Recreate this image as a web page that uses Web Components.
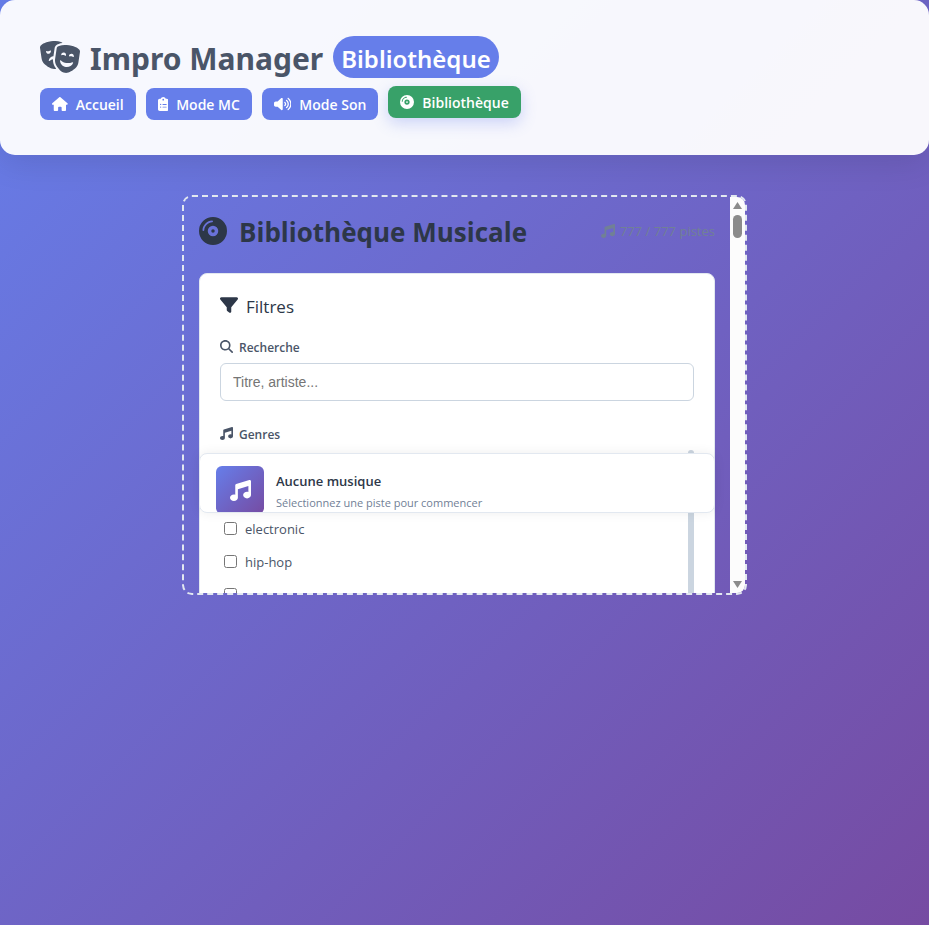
<!DOCTYPE html>
<html lang="fr">
<head>
<meta charset="utf-8">
<meta name="viewport" content="width=device-width, initial-scale=1">
<title>Impro Manager – Bibliothèque</title>
<style>
  html { min-height: 100%; background: linear-gradient(135deg, #667eea 0%, #764ba2 100%); }
  body { margin: 0; font-family: "Segoe UI", "Open Sans", "Noto Sans", sans-serif; color: #2d3748; }
  main { display: flex; justify-content: center; padding: 40px 20px; }
</style>
</head>
<body>
<app-header>
  Impro Manager
  <span slot="badge">Bibliothèque</span>
  <nav-link slot="nav" icon="home">Accueil</nav-link>
  <nav-link slot="nav" icon="clipboard">Mode MC</nav-link>
  <nav-link slot="nav" icon="volume">Mode Son</nav-link>
  <nav-link slot="nav" icon="disc" active>Bibliothèque</nav-link>
</app-header>
<main>
  <scroll-panel>
    <library-heading>
      Bibliothèque Musicale
      <span slot="count">777 / 777 pistes</span>
    </library-heading>
    <filter-card></filter-card>
    <music-player slot="overlay">
      Aucune musique
      <span slot="artist">Sélectionnez une piste pour commencer</span>
    </music-player>
  </scroll-panel>
</main>

<script>
const ICONS = {
  masks: [640, 512, 'M74.6 373.2c41.7 36.1 108 82.5 166.1 73.7c6.1-.9 12.1-2.5 18-4.5c-9.2-12.3-17.3-24.4-24.2-35.4c-21.9-35-28.8-75.2-25.9-113.6c-20.6 4.1-39.2 13-54.7 25.4c-6.5 5.2-16.3 1.3-14.8-7c6.4-33.5 33-60.9 68.2-66.3c2.6-.4 5.3-.7 7.9-.8l19.4-131.3c2-13.8 8-32.7 25-45.9C278.2 53.2 310.5 37 363.2 32.2c-.8-.7-1.6-1.4-2.4-2.1C340.6 14.5 288.4-11.5 175.7 5.6S20.5 63 5.7 83.9C0 91.9-.8 102 .6 111.8L24.8 276.1c5.5 37.3 21.5 72.6 49.8 97.2zm87.7-219.6c4.4-3.1 10.8-2 11.8 3.3c.1 .5 .2 1.1 .3 1.6c3.2 21.8-11.6 42-33.1 45.3s-41.5-11.8-44.7-33.5c-.1-.5-.1-1.1-.2-1.6c-.6-5.4 5.2-8.4 10.3-6.7c9 3 18.8 3.9 28.7 2.4s19.1-5.3 26.8-10.8zM261.6 390c29.4 46.9 79.5 110.9 137.6 119.7s124.5-37.5 166.1-73.7c28.3-24.5 44.3-59.8 49.8-97.2l24.2-164.3c1.4-9.8 .6-19.9-5.1-27.9c-14.8-20.9-57.3-61.2-170-78.3S299.4 77.2 279.2 92.8c-7.8 6-11.5 15.4-12.9 25.2L242.1 282.3c-5.5 37.3-.4 75.8 19.6 107.7zM404.5 235.3c-7.7-5.5-16.8-9.3-26.8-10.8s-19.8-.6-28.7 2.4c-5.1 1.7-10.9-1.3-10.3-6.7c.1-.5 .1-1.1 .2-1.6c3.2-21.8 23.2-36.8 44.7-33.5s36.3 23.5 33.1 45.3c-.1 .5-.2 1.1-.3 1.6c-1 5.3-7.4 6.4-11.8 3.3zm136.2 15.5c-1 5.3-7.4 6.4-11.8 3.3c-7.7-5.5-16.8-9.3-26.8-10.8s-19.8-.6-28.7 2.4c-5.1 1.7-10.9-1.3-10.3-6.7c.1-.5 .1-1.1 .2-1.6c3.2-21.8 23.2-36.8 44.7-33.5s36.3 23.5 33.1 45.3c-.1 .5-.2 1.1-.3 1.6zM530 350.2c-19.6 44.7-66.8 72.5-116.8 64.9s-87.1-48.2-93-96.7c-1-8.3 8.9-12.1 15.2-6.7c23.9 20.8 53.6 35.3 87 40.3s66.1 .1 94.9-12.8c7.6-3.4 16 3.2 12.6 10.9z'],
  home: [576, 512, 'M575.8 255.5c0 18-15 32.1-32 32.1h-32l.7 160.2c0 2.7-.2 5.4-.5 8.1V472c0 22.1-17.9 40-40 40H456c-1.1 0-2.2 0-3.3-.1c-1.4 .1-2.8 .1-4.2 .1H416 392c-22.1 0-40-17.9-40-40V448 384c0-17.7-14.3-32-32-32H256c-17.7 0-32 14.3-32 32v64 24c0 22.1-17.9 40-40 40H160 128.1c-1.5 0-3-.1-4.5-.2c-1.2 .1-2.4 .2-3.6 .2H104c-22.1 0-40-17.9-40-40V360c0-.9 0-1.9 .1-2.8V287.6H32c-18 0-32-14-32-32.1c0-9 3-17 10-24L266.4 8c7-7 15-8 22-8s15 2 21 7L564.8 231.5c8 7 12 15 11 24z'],
  clipboard: [384, 512, 'M192 0c-41.8 0-77.4 26.7-90.5 64H64C28.7 64 0 92.7 0 128V448c0 35.3 28.7 64 64 64H320c35.3 0 64-28.7 64-64V128c0-35.3-28.7-64-64-64H282.5C269.4 26.7 233.8 0 192 0zm0 64a32 32 0 1 1 0 64 32 32 0 1 1 0-64zM72 272a24 24 0 1 1 48 0 24 24 0 1 1 -48 0zm104-16H304c8.8 0 16 7.2 16 16s-7.2 16-16 16H176c-8.8 0-16-7.2-16-16s7.2-16 16-16zM72 368a24 24 0 1 1 48 0 24 24 0 1 1 -48 0zm88 0c0-8.8 7.2-16 16-16H304c8.8 0 16 7.2 16 16s-7.2 16-16 16H176c-8.8 0-16-7.2-16-16z'],
  volume: [640, 512, 'M533.6 32.5C598.5 85.2 640 165.8 640 256s-41.5 170.7-106.4 223.5c-10.3 8.4-25.4 6.8-33.8-3.5s-6.8-25.4 3.5-33.8C557.5 398.2 592 331.2 592 256s-34.5-142.2-88.7-186.3c-10.3-8.4-11.8-23.5-3.5-33.8s23.5-11.8 33.8-3.5zM473.1 107c43.2 35.2 70.9 88.9 70.9 149s-27.7 113.8-70.9 149c-10.3 8.4-25.4 6.8-33.8-3.5s-6.8-25.4 3.5-33.8C475.3 341.3 496 301.1 496 256s-20.7-85.3-53.2-111.8c-10.3-8.4-11.8-23.5-3.5-33.8s23.5-11.8 33.8-3.5zm-60.5 74.5C434.1 199.1 448 225.9 448 256s-13.9 56.9-35.4 74.5c-10.3 8.4-25.4 6.8-33.8-3.5s-6.8-25.4 3.5-33.8C393.1 284.4 400 271 400 256s-6.9-28.4-17.7-37.3c-10.3-8.4-11.8-23.5-3.5-33.8s23.5-11.8 33.8-3.5zM301.1 34.8C312.6 40 320 51.4 320 64V448c0 12.6-7.4 24-18.9 29.2s-25 3.1-34.4-5.3L131.8 352H64c-35.3 0-64-28.7-64-64V224c0-35.3 28.7-64 64-64h67.8L266.7 40.1c9.4-8.4 22.9-10.4 34.4-5.3z'],
  disc: [512, 512, 'M0 256a256 256 0 1 1 512 0A256 256 0 1 1 0 256zm256 32a32 32 0 1 1 0-64 32 32 0 1 1 0 64zm-96-32a96 96 0 1 0 192 0 96 96 0 1 0 -192 0zM96 240c0-35 17.5-71.1 45.2-98.8S205 96 240 96c8.8 0 16-7.2 16-16s-7.2-16-16-16c-45.4 0-89.2 22.3-121.5 54.5S64 194.6 64 240c0 8.8 7.2 16 16 16s16-7.2 16-16z'],
  music: [512, 512, 'M499.1 6.3c8.1 6 12.9 15.6 12.9 25.7v72V368c0 44.2-43 80-96 80s-96-35.8-96-80s43-80 96-80c11.2 0 22 1.6 32 4.6V147L192 223.8V432c0 44.2-43 80-96 80s-96-35.8-96-80s43-80 96-80c11.2 0 22 1.6 32 4.6V200 128c0-14.1 9.3-26.6 22.8-30.7l320-96c9.7-2.9 20.2-1.1 28.3 5z'],
  filter: [512, 512, 'M3.9 54.9C10.5 40.9 24.5 32 40 32H472c15.5 0 29.5 8.9 36.1 22.9s4.6 30.5-5.2 42.5L320 320.9V448c0 12.1-6.8 23.2-17.7 28.6s-23.8 4.3-33.5-3l-64-48c-8.1-6-12.8-15.5-12.8-25.6V320.9L9 97.3C-.7 85.4-2.8 68.8 3.9 54.9z'],
  search: [512, 512, 'M416 208c0 45.9-14.9 88.3-40 122.7L502.6 457.4c12.5 12.5 12.5 32.8 0 45.3s-32.8 12.5-45.3 0L330.7 376c-34.4 25.2-76.8 40-122.7 40C93.1 416 0 322.9 0 208S93.1 0 208 0S416 93.1 416 208zM208 352a144 144 0 1 0 0-288 144 144 0 1 0 0 288z']
};

function define(name, markup, setup) {
  const template = document.createElement('template');
  template.innerHTML = markup;
  customElements.define(name, class extends HTMLElement {
    constructor() {
      super();
      this.attachShadow({ mode: 'open' }).append(template.content.cloneNode(true));
    }
    connectedCallback() { if (setup) setup(this, this.shadowRoot); }
  });
}

define('app-icon', `
  <style>
    :host { display: inline-flex; flex: none; height: var(--icon-size, 14px); }
    svg { height: 100%; width: auto; fill: currentColor; fill-rule: evenodd; }
  </style>
  <svg aria-hidden="true"><path/></svg>`,
  (host, root) => {
    const [w, h, d] = ICONS[host.getAttribute('name')];
    root.querySelector('svg').setAttribute('viewBox', `0 0 ${w} ${h}`);
    root.querySelector('path').setAttribute('d', d);
  });

define('nav-link', `
  <style>
    :host { display: block; }
    a { display: flex; align-items: center; gap: 8px; height: 32px; padding: 0 12px; box-sizing: border-box;
        border-radius: 8px; background: #667eea; color: #fff; text-decoration: none;
        font-size: 14px; font-weight: 600; line-height: 20px; white-space: nowrap; }
    span { padding-top: 2px; }
    :host([active]) a { background: #38a169; transform: translateY(-2px);
        box-shadow: 0 5px 15px rgba(102, 126, 234, .3); }
  </style>
  <a href="#"><span><slot></slot></span></a>`,
  (host, root) => {
    const icon = document.createElement('app-icon');
    icon.setAttribute('name', host.getAttribute('icon'));
    root.querySelector('a').prepend(icon);
    if (host.hasAttribute('active')) root.querySelector('a').setAttribute('aria-current', 'page');
  });

define('app-header', `
  <style>
    :host { display: block; padding: 36px 40px 35px; border-radius: 15px;
            background: rgba(255, 255, 255, .95); box-shadow: 0 8px 32px rgba(0, 0, 0, .1); }
    h1 { display: flex; flex-wrap: wrap; align-items: center; gap: 10px; margin: 0; color: #4a5568;
         font-family: "Segoe UI", "Noto Sans", sans-serif; font-size: 30px; font-weight: 700; line-height: 38px; }
    h1 span { padding-top: 4px; }
    app-icon { --icon-size: 32px; }
    h1 .badge { padding: 4px 8px 0; border-radius: 21px; background: #667eea; color: #fff;
             font-size: 24px; font-weight: 600; }
    nav { display: flex; flex-wrap: wrap; gap: 10px; margin-top: 10px; }
  </style>
  <header>
    <h1><app-icon name="masks"></app-icon><span><slot></slot></span><span class="badge"><slot name="badge"></slot></span></h1>
    <nav><slot name="nav"></slot></nav>
  </header>`);

define('scroll-panel', `
  <style>
    :host { position: relative; display: flex; flex: 0 1 565px; min-width: 0; height: 400px; box-sizing: border-box;
            border: 2px dashed #e2e8f0; border-radius: 10px; overflow: hidden; }
    .content { flex: 1; min-width: 0; padding: 15px; overflow: hidden; }
    .bar { flex: none; display: flex; flex-direction: column; align-items: center; width: 15px;
           padding: 5px 0; box-sizing: border-box; background: #fcfcfc; }
    .arrow { width: 9px; height: 7px; background: #8b8b8b; clip-path: polygon(50% 0, 100% 100%, 0 100%); }
    .arrow.down { margin-top: auto; clip-path: polygon(0 0, 100% 0, 50% 100%); }
    .thumb { width: 9px; height: 23px; margin-top: 6px; border-radius: 5px; background: #8b8b8b; }
    .overlay { position: absolute; left: 15px; right: 30px; bottom: 80px; }
  </style>
  <div class="content"><slot></slot></div>
  <div class="bar" aria-hidden="true"><div class="arrow"></div><div class="thumb"></div><div class="arrow down"></div></div>
  <div class="overlay"><slot name="overlay"></slot></div>`);

define('library-heading', `
  <style>
    :host { display: flex; align-items: center; justify-content: space-between; gap: 12px; margin-bottom: 21px; }
    h2 { display: flex; align-items: center; gap: 12px; margin: 0; color: #2d3748;
         font-size: 26px; font-weight: 700; line-height: 40px; white-space: nowrap; }
    h2 app-icon { --icon-size: 28px; margin-bottom: 2px; }
    .count { display: flex; align-items: center; gap: 5px; margin-bottom: 2px; color: #718096;
             font-size: 13px; line-height: 20px; white-space: nowrap; }
  </style>
  <h2><app-icon name="disc"></app-icon><span><slot></slot></span></h2>
  <div class="count"><app-icon name="music"></app-icon><slot name="count"></slot></div>`);

define('genre-option', `
  <style>
    :host { display: block; }
    label { display: flex; align-items: center; gap: 8px; height: 33px; padding: 0 4px;
            color: #4a5568; font-size: 13px; line-height: 20px; }
    input { width: 13px; height: 13px; margin: 0; }
  </style>
  <label><input type="checkbox"><slot></slot></label>`,
  (host, root) => {
    const name = host.getAttribute('label');
    if (name) root.querySelector('input').setAttribute('aria-label', name);
  });

define('filter-card', `
  <style>
    :host { display: block; padding: 20px; border: 1px solid #e2e8f0; border-radius: 8px; background: #fff; }
    h3 { display: flex; align-items: center; gap: 8px; margin: 0 0 17px; color: #2d3748;
         font-size: 17px; font-weight: 500; line-height: 26px; }
    h3 app-icon { --icon-size: 18px; margin-bottom: 4px; }
    .label { display: flex; align-items: flex-start; gap: 6px; margin-bottom: 4px; color: #4a5568;
             font-size: 12px; font-weight: 600; line-height: 22px; }
    .label app-icon { --icon-size: 13px; margin-top: 3px; }
    input { display: block; width: 100%; height: 38px; margin-bottom: 23px; padding: 0 12px; box-sizing: border-box;
            border: 1px solid #cbd5e0; border-radius: 6px; background: #fff; color: #2d3748;
            font: 14px "Liberation Sans", Arial, sans-serif; }
    input::placeholder { color: #757575; }
    .genres { display: flex; }
    .options { flex: 1; padding-top: 62px; }
    .track { width: 6px; border-radius: 3px; background: #cbd5e0; }
  </style>
  <h3><app-icon name="filter"></app-icon>Filtres</h3>
  <label class="label" for="search"><app-icon name="search"></app-icon>Recherche</label>
  <input id="search" type="text" placeholder="Titre, artiste...">
  <div class="label" id="genres"><app-icon name="music"></app-icon>Genres</div>
  <div class="genres" role="group" aria-labelledby="genres">
    <div class="options">
      <genre-option>electronic</genre-option>
      <genre-option>hip-hop</genre-option>
      <genre-option label="Genre"></genre-option>
    </div>
    <div class="track" aria-hidden="true"></div>
  </div>`);

define('music-player', `
  <style>
    :host { display: flex; gap: 12px; height: 60px; padding: 12px 16px 0; box-sizing: border-box; overflow: hidden;
            border: 1px solid #e2e8f0; border-radius: 8px; background: #fff; box-shadow: 0 0 12px rgba(0, 0, 0, .07); }
    .art { flex: none; display: flex; align-items: center; justify-content: center; width: 48px; height: 48px;
           border-radius: 6px; background: linear-gradient(135deg, #667eea, #764ba2); color: #fff; --icon-size: 21px; }
    .info { min-width: 0; padding-top: 4px; line-height: 22px; white-space: nowrap; }
    .title { color: #2d3748; font-size: 13px; font-weight: 600; }
    .artist { color: #718096; font-size: 11px; }
  </style>
  <div class="art"><app-icon name="music"></app-icon></div>
  <div class="info"><div class="title"><slot></slot></div><div class="artist"><slot name="artist"></slot></div></div>`);
</script>
</body>
</html>
